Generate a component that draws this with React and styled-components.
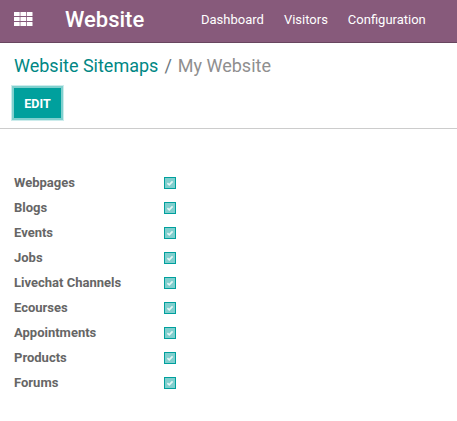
import React from "react";
import styled, { createGlobalStyle } from "styled-components";

const GlobalStyle = createGlobalStyle`
  * { box-sizing: border-box; }
  body { margin: 0; background: #fff; font-family: Roboto, "Liberation Sans", sans-serif; font-size: 13px; color: #666; overflow: hidden; }
`;

const Navbar = styled.header`
  display: flex;
  align-items: center;
  height: 43px;
  padding: 0 0 4px 14px;
  background: #875a7b;
  border-bottom: 1px solid #68465f;
  color: #fff;
`;

const AppsIcon = styled.svg`
  display: block;
  width: 19px;
  height: 14px;
  fill: #fff;
`;

const Brand = styled.div`
  width: 136px;
  margin-left: 32px;
  padding-top: 2px;
  font-size: 22px;
  line-height: 38px;
  font-weight: 500;
`;

const Menu = styled.nav`
  display: flex;
  gap: 20px;
  padding-top: 2px;
  line-height: 38px;
`;

const MenuItem = styled.a`
  white-space: nowrap;
`;

const ControlPanel = styled.section`
  height: 86px;
  padding: 12px 14px 0;
  border-bottom: 1px solid #ccc;
`;

const Breadcrumb = styled.div`
  display: flex;
  height: 22px;
  font-size: 18px;
  line-height: 22px;
  white-space: nowrap;
`;

const CrumbLink = styled.a`
  color: #008784;
`;

const Separator = styled.span`
  padding: 0 6px;
  color: #6c757d;
`;

const Current = styled.span`
  color: #8f8f8f;
`;

const EditButton = styled.button`
  display: block;
  width: 47px;
  height: 30px;
  margin-top: 11px;
  padding: 1px 0 0;
  border: 0;
  background: #00a09d;
  box-shadow: 0 0 0 2px #80d0ce, 0 0 0 3px #ccecec;
  color: #fff;
  font: 700 12.5px/30px Roboto, "Liberation Sans", sans-serif;
`;

const Form = styled.main`
  padding: 41px 14px 0;
`;

const Field = styled.label`
  display: flex;
  align-items: center;
  height: 25px;
`;

const FieldLabel = styled.span`
  width: 150px;
  font-weight: 700;
  line-height: 25px;
`;

const Check = styled.span`
  display: block;
  width: 12px;
  height: 12px;
  border: 1px solid #00a09d;
  background: #80cfce;
`;

const Tick = styled.svg`
  display: block;
  width: 10px;
  height: 10px;
`;

const fields = ["Webpages", "Blogs", "Events", "Jobs", "Livechat Channels", "Ecourses", "Appointments", "Products", "Forums"];

export default function App() {
  return (
    <>
      <GlobalStyle />
      <Navbar>
        <AppsIcon viewBox="0 0 19 14">
          {[0, 5, 10].map((y) =>
            [0, 6.4, 12.8].map((x) => <rect key={`${x}-${y}`} x={x} y={y} width="5.7" height="4.1" rx="0.3" />)
          )}
        </AppsIcon>
        <Brand>Website</Brand>
        <Menu>
          <MenuItem>Dashboard</MenuItem>
          <MenuItem>Visitors</MenuItem>
          <MenuItem>Configuration</MenuItem>
        </Menu>
      </Navbar>
      <ControlPanel>
        <Breadcrumb>
          <CrumbLink>Website Sitemaps</CrumbLink>
          <Separator>/</Separator>
          <Current>My Website</Current>
        </Breadcrumb>
        <EditButton>EDIT</EditButton>
      </ControlPanel>
      <Form>
        {fields.map((name) => (
          <Field key={name}>
            <FieldLabel>{name}</FieldLabel>
            <Check>
              <Tick viewBox="0 0 10 10">
                <path d="M2.4 5.2 4.2 6.8 7.6 3.3" fill="none" stroke="#e4f5f4" strokeWidth="1.7" />
              </Tick>
            </Check>
          </Field>
        ))}
      </Form>
    </>
  );
}
